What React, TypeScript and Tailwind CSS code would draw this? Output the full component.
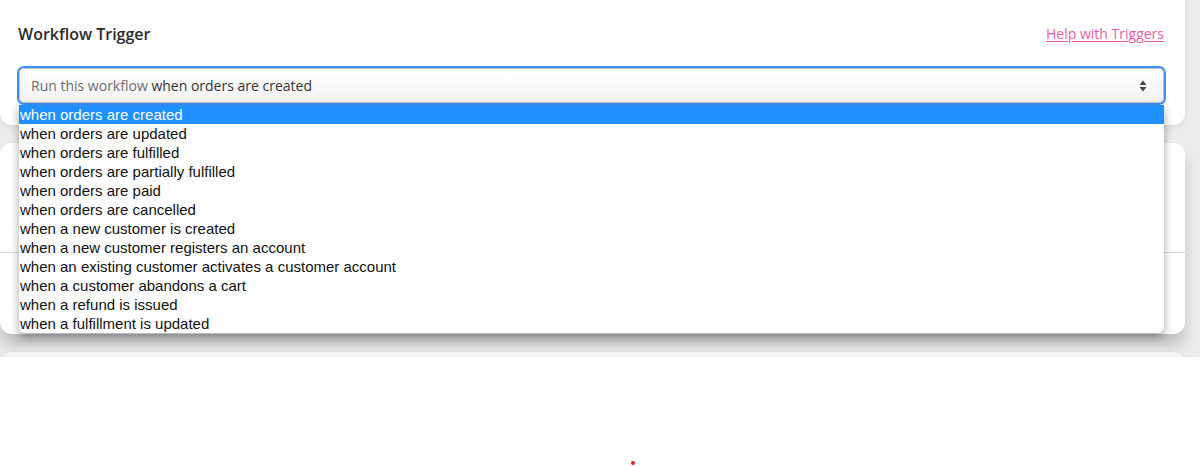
const triggers = [
  "when orders are created",
  "when orders are updated",
  "when orders are fulfilled",
  "when orders are partially fulfilled",
  "when orders are paid",
  "when orders are cancelled",
  "when a new customer is created",
  "when a new customer registers an account",
  "when an existing customer activates a customer account",
  "when a customer abandons a cart",
  "when a refund is issued",
  "when a fulfillment is updated",
];

function SortArrows() {
  return (
    <svg width="8" height="12" viewBox="0 0 8 12" className="text-[#444]">
      <path d="M4 0.5 L7.5 5 L0.5 5 Z" fill="currentColor" />
      <path d="M4 11.5 L7.5 7 L0.5 7 Z" fill="currentColor" />
    </svg>
  );
}

export default function App() {
  const selected = triggers[0];

  return (
    <div className="flex h-[466px] w-full flex-col bg-white font-['Open_Sans',sans-serif]">
      <div className="flex h-[357px] flex-col gap-[18px] overflow-hidden bg-[#ececec] pr-[15px]">
        {/* trigger card */}
        <section className="relative z-10 -mt-[12px] h-[137px] shrink-0 rounded-xl bg-white pt-[34px] pr-[21px] pl-[18px] shadow-[0_2px_6px_rgba(0,0,0,0.08)]">
          <div className="flex items-center justify-between">
            <h2 className="text-[16px] leading-[24px] font-semibold text-[#2b2b2b]">
              Workflow Trigger
            </h2>
            <a
              href="#"
              className="text-[14px] leading-[24px] text-[#ec5ca5] underline underline-offset-2"
            >
              Help with Triggers
            </a>
          </div>

          <div className="relative mt-[22px] ml-[1px]">
            <div className="flex h-[35px] items-center justify-between rounded-[5px] border border-[#c4c4c4] bg-gradient-to-b from-white to-[#f2f2f2] pr-[16px] pl-[11px] text-[14px] ring-2 ring-[#3d8ff5]">
              <span className="text-[#6e6e6e]">
                Run this workflow{" "}
                <span className="text-[#333]">{selected}</span>
              </span>
              <SortArrows />
            </div>

            <ul className="absolute top-full right-0 left-0 mt-[2px] overflow-hidden rounded-b-md bg-white font-['Liberation_Sans',Arial,sans-serif] text-[15px] leading-[19px] text-[#111] shadow-[0_4px_10px_rgba(0,0,0,0.35)]">
              {triggers.map((t) => (
                <li
                  key={t}
                  className={
                    t === selected
                      ? "bg-[#1e90ff] pl-[1px] text-white"
                      : "pl-[1px]"
                  }
                >
                  {t}
                </li>
              ))}
            </ul>
          </div>
        </section>

        {/* actions card (behind dropdown) */}
        <section className="flex h-[191px] shrink-0 flex-col rounded-xl bg-white shadow-[0_12px_14px_rgba(0,0,0,0.18)]">
          <div className="h-[110px] border-b border-[#d9d9d9]" />
          <div className="flex-1" />
        </section>

        <section className="h-[40px] shrink-0 rounded-xl bg-[#f4f4f4] shadow-[0_2px_6px_rgba(0,0,0,0.08)]" />
      </div>

      <div className="flex flex-1 justify-center">
        <span className="mt-[104px] ml-[65px] h-[4px] w-[4px] rounded-full bg-[#e0202a]" />
      </div>
    </div>
  );
}
